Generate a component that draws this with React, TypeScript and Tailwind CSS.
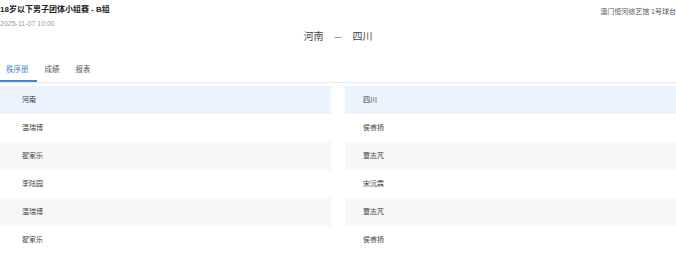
import React from "react";

const left = ["温瑞博", "翟家乐", "李陆园", "温瑞博", "翟家乐"];
const right = ["侯睿扬", "覃志芃", "宋沅霖", "覃志芃", "侯睿扬"];

function Column({ team, names, pad }: { team: string; names: string[]; pad: string }) {
  return (
    <div className="flex flex-col">
      <div className={`h-[28px] flex items-center bg-[#ebf3fd] text-[7px] text-[#333] ${pad}`}>{team}</div>
      {names.map((n, i) => (
        <div
          key={i}
          className={`h-[28px] flex items-center text-[7px] text-[#444] ${pad} ${i % 2 === 1 ? "bg-[#f7f7f7]" : "bg-white"}`}
        >
          {n}
        </div>
      ))}
    </div>
  );
}

export default function App() {
  return (
    <div className="w-[676px] h-[253px] overflow-hidden bg-white font-['Liberation_Sans','Noto_Sans_CJK_SC',sans-serif]">
      <div className="flex justify-between items-start pt-[5px]">
        <div className="flex flex-col">
          <div className="text-[8px] leading-[10px] font-bold text-[#222]">18岁以下男子团体小组赛 - B组</div>
          <div className="mt-[5px] text-[7px] leading-[8px] text-[#999]">2025-11-07 10:00</div>
        </div>
        <div className="mt-[3px] text-[7px] leading-[8px] text-[#555] whitespace-nowrap">澳门恒河综艺馆 1号球台</div>
      </div>
      <div className="mt-[3px] flex justify-center items-center gap-[11px] text-[10px] leading-[12px] text-[#444]">
        <span>河南</span>
        <span className="text-[7px]">—</span>
        <span>四川</span>
      </div>
      <div className="mt-[17px] flex gap-[2px] border-b border-[#e8e8e8]">
        <div className="h-[22px] pl-[6px] pr-[8px] flex items-center border-b-2 border-[#3b87d6] text-[7.5px] text-[#3b87d6]">秩序册</div>
        <div className="h-[22px] pl-[6px] pr-[8px] flex items-center border-b-2 border-transparent text-[7.5px] text-[#555]">成绩</div>
        <div className="h-[22px] pl-[6px] pr-[8px] flex items-center border-b-2 border-transparent text-[7.5px] text-[#555]">报表</div>
      </div>
      <div className="mt-[3px] grid grid-cols-2 gap-x-[14px]">
        <Column team="河南" names={left} pad="pl-[22px]" />
        <Column team="四川" names={right} pad="pl-[18px]" />
      </div>
    </div>
  );
}
